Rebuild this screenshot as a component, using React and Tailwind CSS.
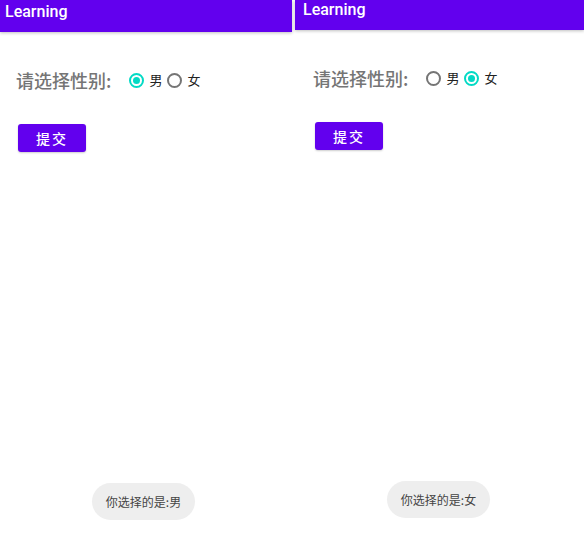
import React from "react";

const Radio = ({ checked }) => (
  <span
    className={`w-[15px] h-[15px] rounded-full border-2 flex items-center justify-center shrink-0 ${
      checked ? "border-[#03DAC5]" : "border-[#757575]"
    }`}
  >
    {checked && <span className="w-[7px] h-[7px] rounded-full bg-[#03DAC5]" />}
  </span>
);

const Phone = ({ selected, className, headerClass, bodyClass, toastClass }) => (
  <div className={`h-[539px] flex flex-col bg-white ${className}`}>
    {/* App bar */}
    <div
      className={`bg-[#6200EE] text-white text-[16px] leading-[20px] font-medium shadow-[0_1px_3px_rgba(0,0,0,0.25)] ${headerClass}`}
      style={{ fontFamily: "Roboto, 'Noto Sans', sans-serif" }}
    >
      Learning
    </div>

    <div className={`flex-1 flex flex-col ${bodyClass}`}>
      {/* Gender picker row */}
      <div className="mt-[36px] pl-[16px] h-[24px] flex items-center">
        <span className="text-[18px] font-medium text-[#757575] leading-[24px]">请选择性别:</span>
        <div className="ml-[18px] flex items-center gap-[5px] text-[13px] text-[#212121]">
          <Radio checked={selected === "男"} />
          <span>男</span>
          <Radio checked={selected === "女"} />
          <span>女</span>
        </div>
      </div>

      <div className="pl-[18px] mt-[32px]">
        <button className="w-[68px] h-[28px] rounded-[3px] bg-[#6200EE] text-white text-[14px] font-medium tracking-[2px] shadow-[0_1px_2px_rgba(0,0,0,0.2)]">
          提交
        </button>
      </div>

      {/* Toast */}
      <div className={`mt-auto flex justify-center ${toastClass}`}>
        <div className="h-[37px] px-[14px] rounded-full bg-[#EEEEEE] flex items-center text-[12px] text-[#444444]">
          你选择的是:{selected}
        </div>
      </div>
    </div>
  </div>
);

export default function App() {
  return (
    <div
      className="w-[584px] h-[539px] flex gap-[3px] bg-white overflow-hidden"
      style={{ fontFamily: "'Noto Sans CJK SC', 'Noto Sans', sans-serif" }}
    >
      <Phone
        selected="男"
        className="w-[292px]"
        headerClass="h-[32px] pl-[5px] pt-[2px]"
        bodyClass=""
        toastClass="mb-[19px] pr-[5px]"
      />
      <Phone
        selected="女"
        className="flex-1"
        headerClass="h-[30px] pl-[8px] pt-0"
        bodyClass="pl-[2px]"
        toastClass="mb-[21px] pr-[4px]"
      />
    </div>
  );
}
